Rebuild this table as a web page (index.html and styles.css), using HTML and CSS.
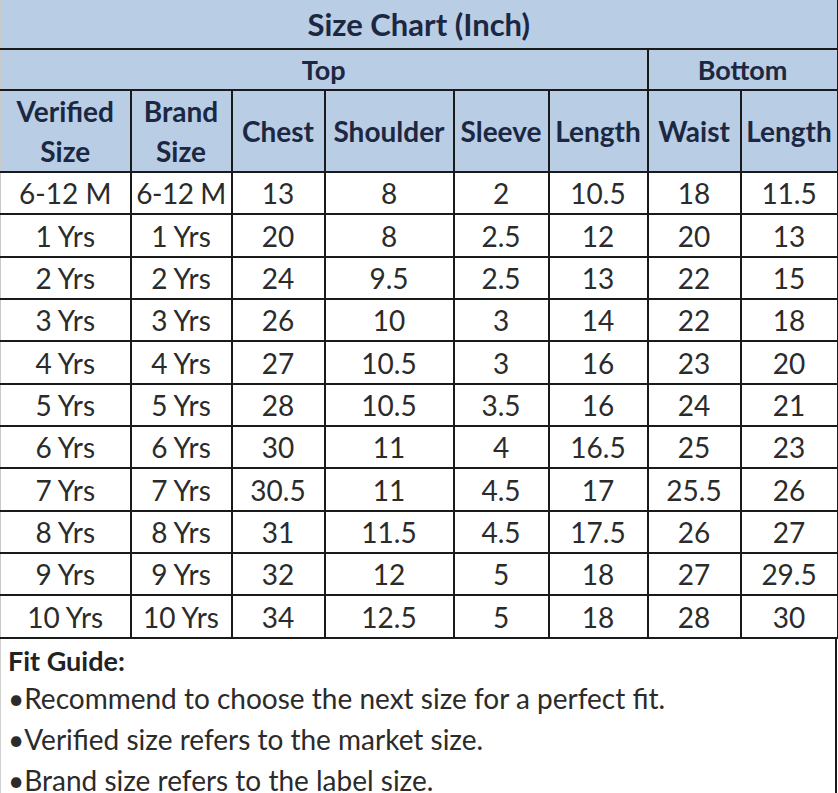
FILE: index.html
```html
<!DOCTYPE html>
<html>
<head>
<meta charset="utf-8">
<title>Size Chart</title>
<link rel="stylesheet" href="styles.css">
</head>
<body>
<div class="chart">
  <table class="size-table">
    <colgroup>
      <col class="c1"><col class="c2"><col class="c3"><col class="c4">
      <col class="c5"><col class="c6"><col class="c7"><col class="c8">
    </colgroup>
    <thead>
      <tr class="row-title"><th colspan="8">Size Chart (Inch)</th></tr>
      <tr class="row-group"><th colspan="6">Top</th><th colspan="2">Bottom</th></tr>
      <tr class="row-head">
        <th>Verified<br>Size</th><th>Brand<br>Size</th><th>Chest</th><th>Shoulder</th>
        <th>Sleeve</th><th>Length</th><th>Waist</th><th>Length</th>
      </tr>
    </thead>
    <tbody>
      <tr><td>6-12 M</td><td class="tight">6-12 M</td><td>13</td><td>8</td><td>2</td><td>10.5</td><td>18</td><td>11.5</td></tr>
      <tr><td>1 Yrs</td><td>1 Yrs</td><td>20</td><td>8</td><td>2.5</td><td>12</td><td>20</td><td>13</td></tr>
      <tr><td>2 Yrs</td><td>2 Yrs</td><td>24</td><td>9.5</td><td>2.5</td><td>13</td><td>22</td><td>15</td></tr>
      <tr><td>3 Yrs</td><td>3 Yrs</td><td>26</td><td>10</td><td>3</td><td>14</td><td>22</td><td>18</td></tr>
      <tr><td>4 Yrs</td><td>4 Yrs</td><td>27</td><td>10.5</td><td>3</td><td>16</td><td>23</td><td>20</td></tr>
      <tr><td>5 Yrs</td><td>5 Yrs</td><td>28</td><td>10.5</td><td>3.5</td><td>16</td><td>24</td><td>21</td></tr>
      <tr><td>6 Yrs</td><td>6 Yrs</td><td>30</td><td>11</td><td>4</td><td>16.5</td><td>25</td><td>23</td></tr>
      <tr><td>7 Yrs</td><td>7 Yrs</td><td>30.5</td><td>11</td><td>4.5</td><td>17</td><td>25.5</td><td>26</td></tr>
      <tr><td>8 Yrs</td><td>8 Yrs</td><td>31</td><td>11.5</td><td>4.5</td><td>17.5</td><td>26</td><td>27</td></tr>
      <tr><td>9 Yrs</td><td>9 Yrs</td><td>32</td><td>12</td><td>5</td><td>18</td><td>27</td><td>29.5</td></tr>
      <tr><td>10 Yrs</td><td>10 Yrs</td><td>34</td><td>12.5</td><td>5</td><td>18</td><td>28</td><td>30</td></tr>
    </tbody>
  </table>
  <div class="fit-guide">
    <div class="fit-title">Fit Guide:</div>
    <div class="fit-item">•Recommend to choose the next size for a perfect fit.</div>
    <div class="fit-item">•Verified size refers to the market size.</div>
    <div class="fit-item">•Brand size refers to the label size.</div>
  </div>
</div>
</body>
</html>
```

FILE: styles.css
```css
html, body {
  margin: 0;
  padding: 0;
  background: #ffffff;
}

body {
  font-family: "Lato", "Open Sans", sans-serif;
  color: #2a2a2a;
  overflow: hidden;
}

.chart {
  width: 837px;
}

.size-table {
  width: 837px;
  border-collapse: collapse;
  table-layout: fixed;
}

.c1 { width: 130px; }
.c2 { width: 101px; }
.c3 { width: 93px; }
.c4 { width: 129px; }
.c5 { width: 95px; }
.c6 { width: 99px; }
.c7 { width: 93px; }
.c8 { width: 97px; }

.size-table th {
  background: #b9cde5;
  color: #1c2741;
  font-weight: 700;
  border: 2px solid #1a1a1a;
  padding: 0;
  text-align: center;
  line-height: 1;
}

.size-table th:first-child,
.size-table td:first-child {
  border-left: 1px solid #c9c9c9;
}

.row-title th {
  height: 48px;
  font-size: 31px;
  border-top: none;
}

.row-group th {
  height: 39px;
  font-size: 27px;
}

.row-head th {
  height: 79px;
  font-size: 28px;
  line-height: 40px;
}

.size-table td {
  height: 40.35px;
  border: 2px solid #1a1a1a;
  padding: 0;
  text-align: center;
  font-size: 28px;
  line-height: 1;
  color: #2b2b2b;
  white-space: nowrap;
}

.size-table td.tight {
  letter-spacing: -0.5px;
}

.fit-guide {
  border-right: 2px solid #1a1a1a;
  border-left: 1px solid #d0d0d0;
  padding: 5px 0 0 7px;
  height: 170px;
}

.fit-title {
  font-weight: 700;
  font-size: 27px;
  color: #222;
  line-height: 34px;
}

.fit-item {
  font-size: 28px;
  line-height: 41px;
  color: #2b2b2b;
}
```
